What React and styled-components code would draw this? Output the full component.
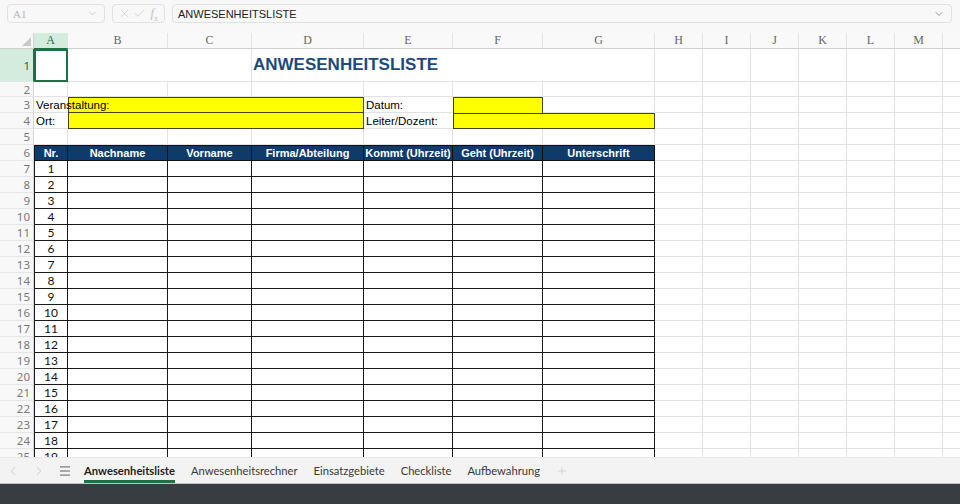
import React from "react";
import styled, { createGlobalStyle, css } from "styled-components";
import { X, Check, ChevronDown, ChevronLeft, ChevronRight, Menu, Plus } from "lucide-react";

const Global = createGlobalStyle`
  html, body { margin: 0; padding: 0; background: #fff; }
  body { font-family: "Liberation Sans", Arial, sans-serif; }
  * { box-sizing: border-box; }
`;

const Page = styled.div`
  width: 960px;
  height: 504px;
  display: flex;
  flex-direction: column;
  overflow: hidden;
  background: #fff;
`;

const Toolbar = styled.div`
  height: 33px;
  flex: none;
  background: #f8f8f8;
  display: flex;
  align-items: flex-start;
  padding: 4px 8px 0 7px;
  gap: 7px;
`;

const Box = styled.div`
  height: 19px;
  border: 1px solid #e1e1e1;
  border-radius: 4px;
  background: #f8f8f8;
  display: flex;
  align-items: center;
  width: ${(p) => p.$w || "auto"};
  flex: ${(p) => (p.$grow ? 1 : "none")};
  padding: 0 6px 0 5px;
  gap: ${(p) => p.$gap || "4px"};
`;

const BoxText = styled.span`
  flex: 1;
  font-size: 11px;
  color: ${(p) => (p.$muted ? "#b4b4b4" : "#222")};
  font-family: ${(p) => (p.$muted ? '"Liberation Serif", serif' : '"Liberation Sans", Arial, sans-serif')};
`;

const Fx = styled.span`
  font-family: "Liberation Serif", serif;
  font-style: italic;
  font-size: 13px;
  color: #c4c4c4;
  margin-left: 2px;
  sub { font-size: 8px; font-style: normal; }
`;

const Sheet = styled.div`
  flex: 1;
  overflow: hidden;
  display: grid;
  grid-template-columns: 34px 34px 100px 84px 112px 89px 90px 112px repeat(7, 48px);
  grid-template-rows: 16px 33px 15px repeat(23, 16px);
  align-content: start;
  background: #fff;
`;

const Corner = styled.div`
  background: #f8f8f8;
  border-right: 1px solid #d6d6d6;
  border-bottom: 1px solid #cfcfcf;
  position: relative;
  &::after {
    content: "";
    position: absolute;
    right: 2px;
    bottom: 2px;
    border-style: solid;
    border-width: 0 0 9px 9px;
    border-color: transparent transparent #c9c9c9 transparent;
  }
`;

const ColHead = styled.div`
  background: ${(p) => (p.$active ? "#d3ecdd" : "#f9f9f9")};
  color: ${(p) => (p.$active ? "#1e6b42" : "#666")};
  border-right: 1px solid #e4e4e4;
  border-bottom: 1px solid ${(p) => (p.$active ? "#1e7145" : "#cfcfcf")};
  font-family: "Liberation Serif", serif;
  font-size: 12px;
  display: flex;
  align-items: center;
  justify-content: center;
`;

const RowHead = styled.div`
  background: ${(p) => (p.$active ? "#d3ecdd" : "#f8f8f8")};
  color: ${(p) => (p.$active ? "#1e6b42" : "#7a7a7a")};
  border-right: 1px solid ${(p) => (p.$active ? "#1e7145" : "#d6d6d6")};
  border-bottom: 1px solid #e6e6e6;
  font-family: "Noto Sans", sans-serif;
  font-size: 11.5px;
  display: flex;
  align-items: center;
  justify-content: flex-end;
  padding-right: 3px;
  overflow: hidden;
`;

const spanCss = css`
  grid-column: span ${(p) => p.$span || 1};
`;

const Cell = styled.div`
  ${spanCss};
  border-right: ${(p) => (p.$noRight ? "none" : "1px solid #e2e2e2")};
  border-bottom: 1px solid #e2e2e2;
`;

const Selected = styled.div`
  border: 2px solid #1e7145;
`;

const Title = styled.div`
  ${spanCss};
  border-right: 1px solid #e2e2e2;
  border-bottom: 1px solid #e2e2e2;
  display: flex;
  align-items: center;
  padding-left: 1px;
  font-size: 17px;
  font-weight: 700;
  color: #1c4a7b;
  white-space: nowrap;
`;

const Label = styled.div`
  border-right: ${(p) => (p.$noRight ? "none" : "1px solid #e2e2e2")};
  border-bottom: 1px solid #e2e2e2;
  display: flex;
  align-items: center;
  padding-left: 2px;
  font-size: 11.5px;
  color: #000;
  white-space: nowrap;
  position: relative;
  z-index: 2;
`;

const Yellow = styled.div`
  ${spanCss};
  background: #ffff00;
  border: 1px solid #444414;
  ${(p) => p.$noTop && "border-top: none;"}
  ${(p) => p.$noBottom && "border-bottom: none;"}
`;

const HeadCell = styled.div`
  background: #0f3b6c;
  color: #fff;
  font-weight: 700;
  font-size: 11px;
  display: flex;
  align-items: center;
  justify-content: center;
  white-space: nowrap;
  border-top: 1px solid #111;
  border-right: 1px solid #111;
  border-bottom: 1px solid #111;
  ${(p) => p.$first && "border-left: 1px solid #111;"}
`;

const TCell = styled.div`
  border-right: 1px solid #1a1a1a;
  border-bottom: 1px solid #1a1a1a;
  ${(p) => p.$first && "border-left: 1px solid #1a1a1a;"}
  display: flex;
  align-items: center;
  justify-content: center;
  font-family: Lato, "Noto Sans", sans-serif;
  font-size: 12px;
  color: #111;
`;

const TabBar = styled.div`
  height: 26px;
  flex: none;
  background: #f3f3f3;
  border-top: 1px solid #e8e8e8;
  display: flex;
  align-items: stretch;
`;

const NavBtn = styled.div`
  width: ${(p) => p.$w || "26px"};
  display: flex;
  align-items: center;
  justify-content: center;
  color: ${(p) => p.$color || "#c6c6c6"};
`;

const Tabs = styled.div`
  display: flex;
  align-items: stretch;
  gap: 16px;
  margin-left: 6px;
`;

const Tab = styled.div`
  display: flex;
  align-items: center;
  font-family: Lato, "Noto Sans", sans-serif;
  font-size: 11.2px;
  color: ${(p) => (p.$active ? "#1f1f1f" : "#3a3a3a")};
  font-weight: ${(p) => (p.$active ? 700 : 400)};
  position: relative;
  white-space: nowrap;
  ${(p) =>
    p.$active &&
    css`
      &::after {
        content: "";
        position: absolute;
        left: 0;
        right: 0;
        bottom: 0;
        height: 3px;
        background: #1e7145;
      }
    `}
`;

const StatusBar = styled.div`
  height: 21px;
  flex: none;
  background: #383d42;
  border-top: 1px solid #bfc2c4;
`;

const headers = ["Nr.", "Nachname", "Vorname", "Firma/Abteilung", "Kommt (Uhrzeit)", "Geht (Uhrzeit)", "Unterschrift"];
const letters = ["A", "B", "C", "D", "E", "F", "G", "H", "I", "J", "K", "L", "M", ""];

function GridFill({ n, row }) {
  return Array.from({ length: n }, (_, i) => <Cell key={`${row}-g${i}`} />);
}

export default function App() {
  const rows = [];
  for (let r = 7; r <= 25; r++) {
    rows.push(
      <React.Fragment key={r}>
        <RowHead>{r}</RowHead>
        {Array.from({ length: 7 }, (_, c) => (
          <TCell key={c} $first={c === 0}>
            {c === 0 ? r - 6 : null}
          </TCell>
        ))}
        <GridFill n={7} row={r} />
      </React.Fragment>
    );
  }

  return (
    <Page>
      <Global />
      <Toolbar>
        <Box $w="98px">
          <BoxText $muted>A1</BoxText>
          <ChevronDown size={11} color="#b8b8b8" strokeWidth={1.5} />
        </Box>
        <Box $w="53px" $gap="2px">
          <X size={15} color="#c4c4c4" strokeWidth={1.2} />
          <Check size={15} color="#c4c4c4" strokeWidth={1.2} />
          <Fx>
            f<sub>x</sub>
          </Fx>
        </Box>
        <Box $grow>
          <BoxText>ANWESENHEITSLISTE</BoxText>
          <ChevronDown size={12} color="#777" strokeWidth={1.5} />
        </Box>
      </Toolbar>

      <Sheet>
        <Corner />
        {letters.map((l, i) => (
          <ColHead key={i} $active={i === 0}>
            {l}
          </ColHead>
        ))}

        <RowHead $active>1</RowHead>
        <Selected />
        <Cell $span={2} />
        <Title $span={4}>ANWESENHEITSLISTE</Title>
        <GridFill n={7} row={1} />

        <RowHead>2</RowHead>
        <GridFill n={14} row={2} />

        <RowHead>3</RowHead>
        <Label $noRight>Veranstaltung:</Label>
        <Yellow $span={3} />
        <Label $noRight>Datum:</Label>
        <Yellow $noBottom />
        <Cell />
        <GridFill n={7} row={3} />

        <RowHead>4</RowHead>
        <Label $noRight>Ort:</Label>
        <Yellow $span={3} $noTop />
        <Label $noRight>Leiter/Dozent:</Label>
        <Yellow $span={2} />
        <GridFill n={7} row={4} />

        <RowHead>5</RowHead>
        <GridFill n={14} row={5} />

        <RowHead>6</RowHead>
        {headers.map((h, i) => (
          <HeadCell key={h} $first={i === 0}>
            {h}
          </HeadCell>
        ))}
        <GridFill n={7} row={6} />

        {rows}
      </Sheet>

      <TabBar>
        <NavBtn>
          <ChevronLeft size={14} strokeWidth={1.5} />
        </NavBtn>
        <NavBtn>
          <ChevronRight size={14} strokeWidth={1.5} />
        </NavBtn>
        <NavBtn $color="#555">
          <Menu size={14} strokeWidth={1.6} />
        </NavBtn>
        <Tabs>
          <Tab $active>Anwesenheitsliste</Tab>
          <Tab>Anwesenheitsrechner</Tab>
          <Tab>Einsatzgebiete</Tab>
          <Tab>Checkliste</Tab>
          <Tab>Aufbewahrung</Tab>
          <NavBtn $w="12px" $color="#c2c2c2">
            <Plus size={14} strokeWidth={1.3} />
          </NavBtn>
        </Tabs>
      </TabBar>
      <StatusBar />
    </Page>
  );
}
